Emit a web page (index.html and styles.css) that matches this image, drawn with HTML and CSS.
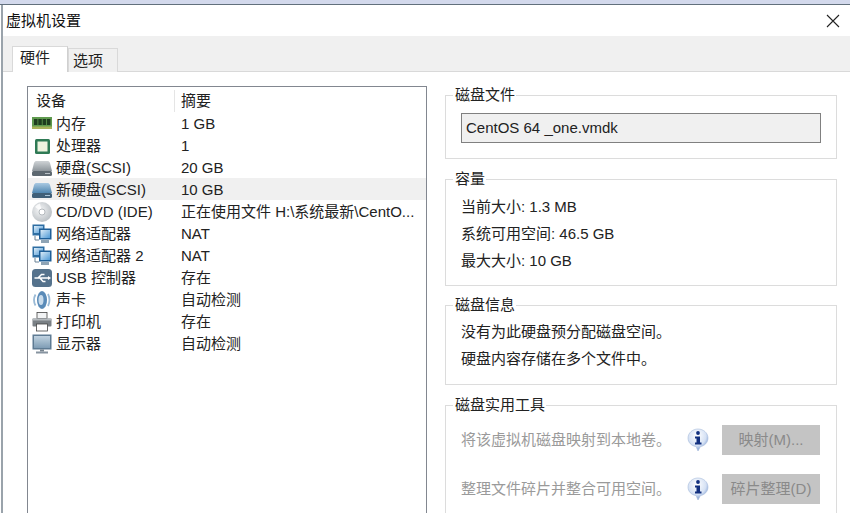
FILE: index.html
```html
<!DOCTYPE html>
<html lang="zh-CN">
<head>
<meta charset="utf-8">
<title>虚拟机设置</title>
<link rel="stylesheet" href="styles.css">
</head>
<body>
<svg class="defs" width="0" height="0">
  <defs>
    <linearGradient id="diskGray" x1="0" y1="0" x2="0" y2="1"><stop offset="0" stop-color="#cfd3d6"/><stop offset="1" stop-color="#8d959b"/></linearGradient>
    <linearGradient id="diskBlue" x1="0" y1="0" x2="0" y2="1"><stop offset="0" stop-color="#a9c9e2"/><stop offset="1" stop-color="#4f86b0"/></linearGradient>
    <radialGradient id="cdFill" cx=".4" cy=".4" r=".7"><stop offset="0" stop-color="#f6f7f8"/><stop offset="1" stop-color="#b4babf"/></radialGradient>
    <linearGradient id="screen" x1="0" y1="0" x2="1" y2="1"><stop offset="0" stop-color="#dcecf8"/><stop offset="1" stop-color="#4f9ad6"/></linearGradient>
    <linearGradient id="monitor" x1="0" y1="0" x2="0" y2="1"><stop offset="0" stop-color="#c0d2e0"/><stop offset="1" stop-color="#7f9db5"/></linearGradient>
    <radialGradient id="infoFill" cx=".45" cy=".3" r=".75"><stop offset="0" stop-color="#ffffff"/><stop offset=".6" stop-color="#d5e1f4"/><stop offset="1" stop-color="#5f86c6"/></radialGradient>
    <symbol id="net" viewBox="0 0 20 20">
      <rect x=".5" y=".5" width="12" height="11" fill="#2e6ea3"/>
      <rect x="2" y="2" width="9" height="7" fill="url(#screen)"/>
      <rect x="7" y="4.500" width="12.500" height="11" fill="#1f5f98"/>
      <rect x="8.500" y="6" width="9.500" height="8" fill="url(#screen)"/>
      <rect x="9" y="16" width="8" height="3" fill="#8fa4b5"/>
      <path d="M3 12V16H7" stroke="#6b8296" fill="none"/>
    </symbol>
    <symbol id="info" viewBox="0 0 22 24">
      <path d="M11 1C16.500 1 21 5 21 10C21 14.500 17.500 18 13.500 18.500L11 23L9 18.500C4.500 18 1 14.500 1 10C1 5 5.500 1 11 1Z" fill="url(#infoFill)" stroke="#a8bcdc" stroke-width=".6"/>
      <circle cx="11" cy="5" r="1.900" fill="#12307f"/>
      <path d="M8 8.500H13V14.500H14.500V16.500H8V14.500H9.500V10.500H8Z" fill="#12307f"/>
    </symbol>
  </defs>
</svg>
<div class="topstrip"></div>
<div class="window">
  <header class="titlebar">
    <span class="title">虚拟机设置</span>
    <svg class="close" width="14" height="14" viewBox="0 0 14 14"><path d="M1 1L13 13M13 1L1 13" stroke="#222" stroke-width="1.1" fill="none"/></svg>
  </header>
  <nav class="tabs">
    <span class="tab active">硬件</span>
    <span class="tab">选项</span>
  </nav>
  <main class="content">
    <section class="devices">
      <div class="row head"><span class="c1">设备</span><span class="c2">摘要</span></div>
      <div class="row"><span class="c1"><svg class="ic" viewBox="0 0 20 20"><rect x="0" y="3" width="20" height="12" fill="#5f9a4e"/><rect x="2" y="5" width="3.500" height="6" fill="#1f3d1f"/><rect x="6.300" y="5" width="3.500" height="6" fill="#1f3d1f"/><rect x="10.600" y="5" width="3.500" height="6" fill="#1f3d1f"/><rect x="14.900" y="5" width="3.500" height="6" fill="#1f3d1f"/><rect x="0" y="12.500" width="20" height="2.500" fill="#a8b25a"/></svg>内存</span><span class="c2">1 GB</span></div>
      <div class="row"><span class="c1"><svg class="ic" viewBox="0 0 20 20"><rect x="3" y="3" width="15" height="15" rx="1.500" fill="#2f7a55"/><rect x="5.500" y="5.500" width="10" height="10" fill="#eef3df"/></svg>处理器</span><span class="c2">1</span></div>
      <div class="row"><span class="c1"><svg class="ic" viewBox="0 0 20 20"><path d="M4 3H16C17 3 17.500 4 18 5L20 13H0L2 5C2.500 4 3 3 4 3Z" fill="url(#diskGray)"/><rect x="0" y="13" width="20" height="5" rx="1.500" fill="#5d6870"/><rect x="13" y="15" width="5" height="1" fill="#b8c0c6"/></svg>硬盘(SCSI)</span><span class="c2">20 GB</span></div>
      <div class="row sel"><span class="c1"><svg class="ic" viewBox="0 0 20 20"><path d="M4 3H16C17 3 17.500 4 18 5L20 13H0L2 5C2.500 4 3 3 4 3Z" fill="url(#diskBlue)"/><rect x="0" y="13" width="20" height="5" rx="1.500" fill="#3f5f78"/><rect x="13" y="15" width="5" height="1" fill="#a8c4d8"/></svg>新硬盘(SCSI)</span><span class="c2">10 GB</span></div>
      <div class="row"><span class="c1"><svg class="ic" viewBox="0 0 20 20"><circle cx="10" cy="10" r="10" fill="url(#cdFill)"/><path d="M10 10L3 5A8.600 8.600 0 0 1 8 1.600Z" fill="#fff" opacity=".8"/><circle cx="10" cy="10" r="3" fill="#fff" stroke="#a4abb0" stroke-width=".8"/></svg>CD/DVD (IDE)</span><span class="c2">正在使用文件 H:\系统最新\CentO...</span></div>
      <div class="row"><span class="c1"><svg class="ic"><use href="#net"/></svg>网络适配器</span><span class="c2">NAT</span></div>
      <div class="row"><span class="c1"><svg class="ic"><use href="#net"/></svg>网络适配器 2</span><span class="c2">NAT</span></div>
      <div class="row"><span class="c1"><svg class="ic" viewBox="0 0 20 20"><rect x="0" y="1" width="20" height="18" rx="3.500" fill="#55728c"/><path d="M2.500 10H16M6 10L9.500 6.500H12.500M8 10L11 13.500H13.500" stroke="#fff" stroke-width="1.500" fill="none"/><path d="M16 8L19 10L16 12Z" fill="#fff"/></svg>USB 控制器</span><span class="c2">存在</span></div>
      <div class="row"><span class="c1"><svg class="ic" viewBox="0 0 20 20"><ellipse cx="10" cy="10" rx="5" ry="9" fill="#5a8bb8"/><ellipse cx="9" cy="10" rx="2.500" ry="5" fill="#c9dcec"/><path d="M16 4Q19 10 16 16M3.500 4.500Q.5 10 3.500 15.500" stroke="#9abad6" stroke-width="1.800" fill="none"/></svg>声卡</span><span class="c2">自动检测</span></div>
      <div class="row"><span class="c1"><svg class="ic" viewBox="0 0 20 20"><rect x="5" y="0.500" width="10" height="6" fill="#f2f3f4" stroke="#444" stroke-width=".8"/><rect x="0.500" y="6.500" width="19" height="8" rx="1" fill="#7a8085"/><rect x="0.500" y="6.500" width="19" height="2" fill="#b4b9bd"/><rect x="4.500" y="12" width="11" height="7" fill="#fff" stroke="#444" stroke-width=".8"/></svg>打印机</span><span class="c2">存在</span></div>
      <div class="row"><span class="c1"><svg class="ic" viewBox="0 0 20 20"><rect x="0.500" y="0.500" width="19" height="15" fill="#5e7b93"/><rect x="2" y="2" width="16" height="12" fill="url(#monitor)"/><rect x="8" y="15.500" width="4" height="2" fill="#76838e"/><rect x="4" y="17.500" width="12" height="2" fill="#8794a0"/></svg>显示器</span><span class="c2">自动检测</span></div>
    </section>
    <aside class="panel">
      <fieldset class="group g1">
        <legend>磁盘文件</legend>
        <div class="field">CentOS 64 _one.vmdk</div>
      </fieldset>
      <fieldset class="group g2">
        <legend>容量</legend>
        <p>当前大小: 1.3 MB</p>
        <p>系统可用空间: 46.5 GB</p>
        <p>最大大小: 10 GB</p>
      </fieldset>
      <fieldset class="group g3">
        <legend>磁盘信息</legend>
        <p>没有为此硬盘预分配磁盘空间。</p>
        <p>硬盘内容存储在多个文件中。</p>
      </fieldset>
      <fieldset class="group g4">
        <legend>磁盘实用工具</legend>
        <div class="tool">
          <span class="tooltext">将该虚拟机磁盘映射到本地卷。</span>
          <svg class="info"><use href="#info"/></svg>
          <span class="btn">映射(M)...</span>
        </div>
        <div class="tool">
          <span class="tooltext">整理文件碎片并整合可用空间。</span>
          <svg class="info"><use href="#info"/></svg>
          <span class="btn">碎片整理(D)</span>
        </div>
      </fieldset>
    </aside>
  </main>
</div>
</body>
</html>
```
FILE: styles.css
```css
* { box-sizing: border-box; }
html, body { margin: 0; padding: 0; height: 513px; overflow: hidden; background: #fff; }
body { font: 15px/22px "Liberation Sans", "Noto Sans CJK SC", sans-serif; color: #222; }
.defs { display: block; height: 0; width: 0; }
.topstrip { height: 5px; background: #d3d9ec; border-bottom: 1px solid #62707c; }
.window { height: 508px; border-left: 2px solid #9aa3ab; margin-left: 1px; display: flex; flex-direction: column; }
.titlebar { height: 31px; flex: none; display: flex; align-items: center; justify-content: space-between; padding: 0 10px 0 3px; }
.title { color: #111; }
.close { display: block; margin-top: 1px; }
.tabs { height: 36px; flex: none; background: #f0f0f0; display: flex; align-items: flex-end; padding-left: 9px; border-bottom: 1px solid #d9d9d9; }
.tab { width: 50px; height: 24px; background: #f0f0f0; border: 1px solid #d9d9d9; border-bottom: 0; padding-left: 4px; line-height: 23px; margin-bottom: -1px; }
.tab.active { width: 56px; height: 26px; background: #fff; border-right: 1px solid #d0d0d0; position: relative; z-index: 1; line-height: 22px; padding-left: 7px; }
.content { flex: 1; display: flex; padding: 14px 13px 0 24px; min-height: 0; }
.devices { width: 400px; height: 440px; flex: none; border: 1px solid #828790; border-bottom: 0; padding-top: 1px; }
.row { height: 22px; display: flex; align-items: center; white-space: nowrap; padding-top: 2px; }
.row.head { height: 24px; }
.row.sel { background: #f0f0f0; }
.c1 { width: 147px; display: flex; align-items: center; padding-left: 4px; flex: none; height: 100%; }
.c2 { padding-left: 6px; }
.head .c1 { padding-left: 8px; border-right: 1px solid #e5e5e5; }
.ic { width: 20px; height: 20px; margin-right: 4px; flex: none; }
.panel { margin-left: 18px; width: 392px; flex: none; display: flex; flex-direction: column; }
.group { margin: 0; border: 1px solid #dcdcdc; padding: 0 15px; min-width: 0; flex: none; }
.group legend { padding: 0 1px 0 2px; margin-left: -8px; line-height: 20px; }
.group p { margin: 0; height: 27px; line-height: 27px; }
.g1 { height: 74px; margin-top: -1px; padding-top: 8px; }
.field { height: 30px; width: 360px; background: #f0f0f0; border: 1px solid #808080; line-height: 27px; padding-left: 4px; }
.g2 { height: 117px; margin-top: 10px; padding-top: 4px; }
.g3 { height: 90px; margin-top: 9px; padding-top: 3px; }
.g4 { height: 120px; margin-top: 10px; padding-top: 10px; }
.tooltext { width: 226px; color: #9a9a9a; flex: none; }
.tool { display: flex; align-items: center; height: 30px; margin-bottom: 19px; }
.info { width: 22px; height: 24px; flex: none; }
.btn { width: 98px; height: 30px; margin-left: 13px; background: #c4c4c4; color: #8a8a8a; text-align: center; line-height: 29px; flex: none; }
```
